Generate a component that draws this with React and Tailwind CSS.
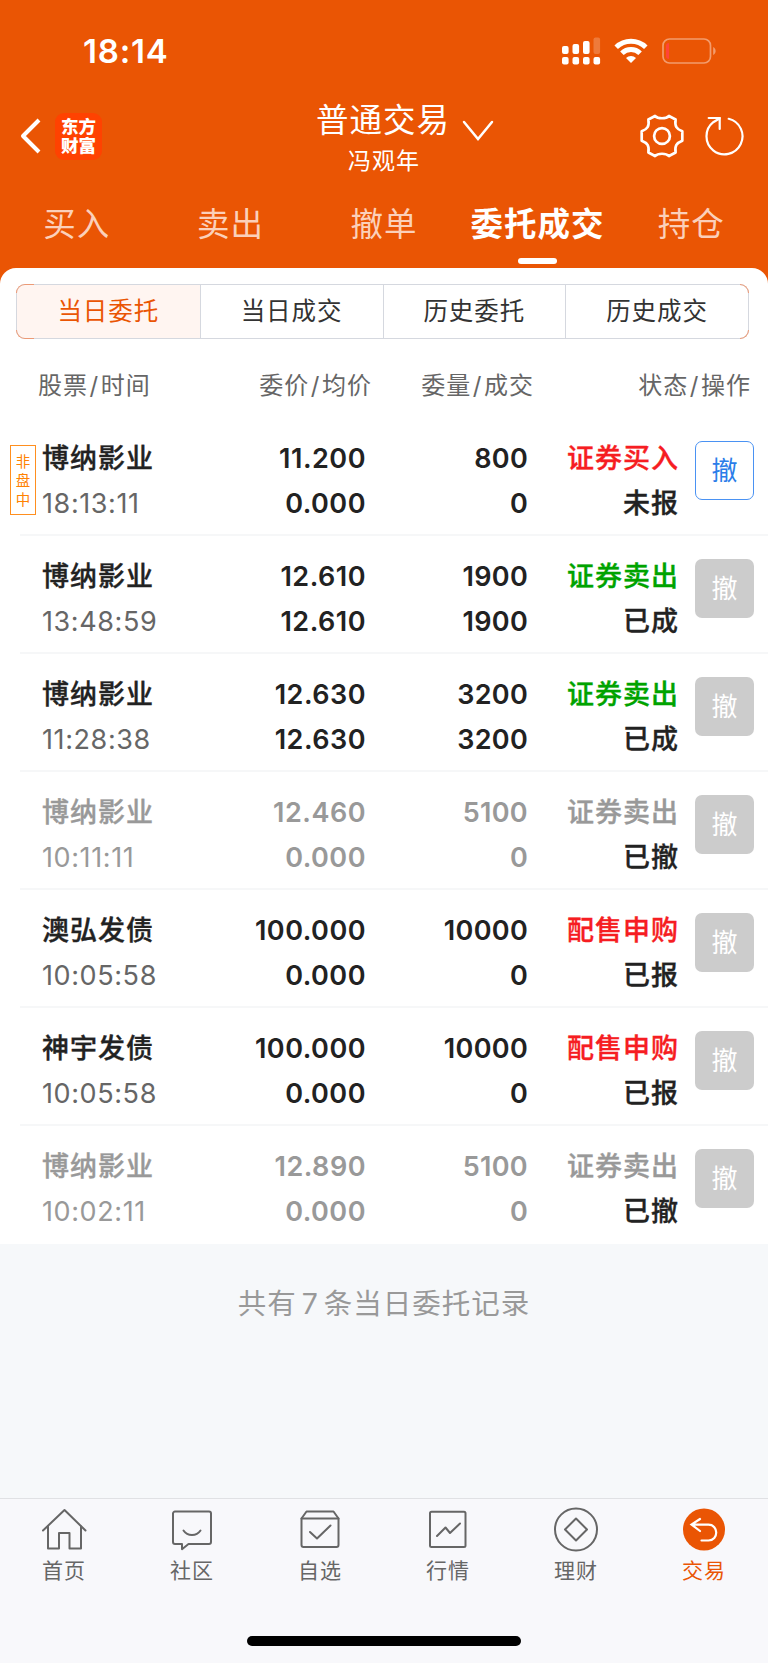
const tabs = ['买入', '卖出', '撤单', '委托成交', '持仓']
const segments = ['当日委托', '当日成交', '历史委托', '历史成交']

const orders = [
  { name: '博纳影业', time: '18:13:11', price: '11.200', avg: '0.000', qty: '800', done: '0', side: '证券买入', kind: 'buy', status: '未报', tag: '非盘中', canCancel: true },
  { name: '博纳影业', time: '13:48:59', price: '12.610', avg: '12.610', qty: '1900', done: '1900', side: '证券卖出', kind: 'sell', status: '已成' },
  { name: '博纳影业', time: '11:28:38', price: '12.630', avg: '12.630', qty: '3200', done: '3200', side: '证券卖出', kind: 'sell', status: '已成' },
  { name: '博纳影业', time: '10:11:11', price: '12.460', avg: '0.000', qty: '5100', done: '0', side: '证券卖出', kind: 'off', status: '已撤' },
  { name: '澳弘发债', time: '10:05:58', price: '100.000', avg: '0.000', qty: '10000', done: '0', side: '配售申购', kind: 'buy', status: '已报' },
  { name: '神宇发债', time: '10:05:58', price: '100.000', avg: '0.000', qty: '10000', done: '0', side: '配售申购', kind: 'buy', status: '已报' },
  { name: '博纳影业', time: '10:02:11', price: '12.890', avg: '0.000', qty: '5100', done: '0', side: '证券卖出', kind: 'off', status: '已撤' },
]

const sideColor = {
  buy: 'text-[#f61d22]',
  sell: 'text-[#00a300]',
  off: 'text-[#999]',
}

function StatusBar() {
  return (
    <div className="flex h-[102px] items-center justify-between pl-[83px] pr-[51px] text-white">
      <div className="text-[33px] font-semibold leading-none tracking-[0.8px]">18:14</div>
      <div className="flex items-center">
        <svg width="39" height="28" viewBox="0 0 39 28" fill="currentColor">
          <rect x="0" y="9" width="6.6" height="8" rx="2" />
          <rect x="10.5" y="7" width="6.6" height="10" rx="2" />
          <rect x="21" y="4" width="6.6" height="13" rx="2" />
          <rect x="31.5" y="0.5" width="6.6" height="16.5" rx="2" opacity="0.22" />
          <rect x="0" y="20" width="6.6" height="7.6" rx="2" />
          <rect x="10.5" y="20" width="6.6" height="7.6" rx="2" />
          <rect x="21" y="20" width="6.6" height="7.6" rx="2" />
          <rect x="31.5" y="20" width="6.6" height="7.6" rx="2" />
        </svg>
        <svg className="ml-[13px]" width="34" height="26" viewBox="0 0 34 26">
          <g fill="none" stroke="currentColor" strokeWidth="5">
            <path d="M2.2 9.2a21.3 21.3 0 0 1 29.6 0" />
            <path d="M7.9 15.2a13 13 0 0 1 18.2 0" />
          </g>
          <path d="M17 25l-5-5a7.2 7.2 0 0 1 10 0z" fill="currentColor" />
        </svg>
        <svg className="ml-[14px]" width="55" height="26" viewBox="0 0 55 26">
          <rect x="1" y="1" width="47.5" height="24" rx="6.5" fill="none" stroke="currentColor" strokeOpacity="0.42" strokeWidth="1.7" />
          <path d="M51.2 9c3.2 1.6 3.2 6.4 0 8z" fill="currentColor" opacity="0.42" />
          <path d="M7 5v16c-2 0-3-1-3-3V8c0-2 1-3 3-3z" fill="#ff4438" />
        </svg>
      </div>
    </div>
  )
}

function TitleBar() {
  return (
    <div className="grid h-[80px] grid-cols-[1fr_auto_1fr] text-white">
      <div className="flex items-center pb-[12px] pl-[20px]">
        <svg width="22" height="36" viewBox="0 0 22 36" fill="none" stroke="currentColor" strokeWidth="4" strokeLinejoin="round">
          <path d="M19 2L3 18l16 16" />
        </svg>
        <div className="ml-[13px] flex h-[47px] w-[47px] flex-col items-center justify-center rounded-[9px] bg-[#ff4201] text-[17.5px] font-black leading-[19px]">
          <span>东方</span>
          <span>财富</span>
        </div>
      </div>
      <div className="flex flex-col items-center">
        <div className="-mt-px flex h-[40px] items-center">
          <span className="pl-[42px] text-[32.5px] leading-[40px] tracking-[1px]">普通交易</span>
          <svg className="ml-[12px] mt-[20px]" width="32" height="22" viewBox="0 0 32 22" fill="none" stroke="currentColor" strokeWidth="2.5" strokeLinecap="round">
            <path d="M2 2l14 17L30 2" />
          </svg>
        </div>
        <div className="mt-px text-[23px] leading-[38px] tracking-[1px]">冯观年</div>
      </div>
      <div className="flex items-center justify-end pb-[12px] pr-[23px]">
        <svg width="46" height="44" viewBox="-23 -22 46 44" fill="none" stroke="currentColor" strokeWidth="2.7" strokeLinejoin="round">
          <path d="M-7-20C-4-17 4-17 7-20L13.600-16.500C12.600-9.500 14.500-7 20.300-4.700V4.700C14.500 7 12.600 9.500 13.600 16.500L7 20C4 17-4 17-7 20L-13.600 16.500C-12.600 9.500-14.500 7-20.300 4.700V-4.700C-14.500-7-12.600-9.500-13.600-16.500Z" />
          <circle r="7.900" />
        </svg>
        <svg className="ml-[18px]" width="42" height="42" viewBox="0 0 42 42" fill="none" stroke="currentColor" strokeWidth="2.2" strokeLinecap="round">
          <path d="M25.700 3.800A18 18 0 1 1 10.300 7.200L16.500 3.500" />
          <path d="M5.700 3h11v11" />
        </svg>
      </div>
    </div>
  )
}

function Tabs() {
  return (
    <div className="grid h-[86px] grid-cols-5 text-[32.5px] tracking-[1px]">
      {tabs.map((t) => {
        const active = t === '委托成交'
        return (
          <div key={t} className="flex flex-col items-center whitespace-nowrap pt-[21px]">
            <span className={active ? 'font-bold leading-[44px] text-white' : 'leading-[44px] text-[#fbd0ba]'}>{t}</span>
            {active && <span className="mt-[11px] h-[6px] w-[39px] rounded-full bg-white" />}
          </div>
        )
      })}
    </div>
  )
}

function Segments() {
  return (
    <div className="relative ml-4 mr-[19px]">
      <div className="grid h-[55px] grid-cols-4 overflow-hidden rounded-[9px] border border-[#d5d8df]">
        {segments.map((s, i) => (
          <div
            key={s}
            className={
              i === 0
                ? 'flex items-center justify-center bg-[#fff5f1] text-[24.5px] tracking-[1px] text-[#ea5504]'
                : 'flex items-center justify-center border-l border-[#d5d8df] text-[24.5px] tracking-[1px] text-[#333]'
            }
          >
            {s}
          </div>
        ))}
      </div>
      {/* accent on the four rounded corners */}
      <span className="absolute left-0 top-0 h-[9px] w-[18px] rounded-tl-[9px] border-l border-t border-[#ec9a76]" />
      <span className="absolute bottom-0 left-0 h-[9px] w-[18px] rounded-bl-[9px] border-b border-l border-[#ec9a76]" />
      <span className="absolute right-0 top-0 h-[9px] w-[9px] rounded-tr-[9px] border-r border-t border-[#ec9a76]" />
      <span className="absolute bottom-0 right-0 h-[9px] w-[9px] rounded-br-[9px] border-b border-r border-[#ec9a76]" />
    </div>
  )
}

function ColumnTitle({ a, b, className }) {
  return (
    <div className={className}>
      {a}
      <span className="mx-[1.5px]">/</span>
      {b}
    </div>
  )
}

function OrderRow({ o }) {
  const off = o.kind === 'off'
  const main = off ? 'text-[#999]' : 'text-[#222]'
  return (
    <div className="flex h-[118px] pl-[10px] pr-[14px]">
      <div className="w-[32px] pt-[27px]">
        {o.tag && (
          <div className="flex h-[70px] w-[26px] flex-col items-center justify-center border border-[#ff8f1f] text-[14.5px] leading-[19px] text-[#ff8200]">
            {[...o.tag].map((c) => (
              <span key={c}>{c}</span>
            ))}
          </div>
        )}
      </div>
      <div className="w-[130px] whitespace-nowrap pt-[18px] leading-[45px]">
        <div className={`text-[27px] font-medium tracking-[1px] [-webkit-text-stroke:0.35px] ${main}`}>{o.name}</div>
        <div className={off ? 'text-[27px] tracking-[0.6px] text-[#999]' : 'text-[27px] tracking-[0.6px] text-[#666]'}>{o.time}</div>
      </div>
      <div className={`w-[194px] pt-[18px] text-right text-[27px] font-semibold leading-[45px] tracking-[0.5px] ${main}`}>
        <div>{o.price}</div>
        <div>{o.avg}</div>
      </div>
      <div className={`w-[162px] pt-[18px] text-right text-[27px] font-semibold leading-[45px] tracking-[0.3px] ${main}`}>
        <div>{o.qty}</div>
        <div>{o.done}</div>
      </div>
      <div className="w-[151px] pt-[18px] text-right text-[27px] font-medium leading-[45px] tracking-[1px] [-webkit-text-stroke:0.35px]">
        <div className={sideColor[o.kind]}>{o.side}</div>
        <div className="text-[#222]">{o.status}</div>
      </div>
      <button
        className={
          o.canCancel
            ? 'ml-auto mt-[23px] h-[59px] w-[59px] rounded-[7px] border border-[#4a92f3] text-[26px] text-[#2b7de9]'
            : 'ml-auto mt-[23px] h-[59px] w-[59px] rounded-[7px] bg-[#ccc] text-[26px] text-white'
        }
      >
        撤
      </button>
    </div>
  )
}

const navIcons = {
  首页: (
    <>
      <path d="M2 22.500L23.500 2 44.500 22.500" />
      <path d="M7 18.500v22h11V25h10.500v15.500h11.500V18.500" />
    </>
  ),
  社区: (
    <>
      <path d="M6 3.500h34a2 2 0 0 1 2 2V34a2 2 0 0 1-2 2H19.500l-6.500 5.200V36H6a2 2 0 0 1-2-2V5.500a2 2 0 0 1 2-2z" />
      <path d="M14.500 22.500c4 6 13 6 17 0" />
    </>
  ),
  自选: (
    <>
      <path d="M4.500 10.500l5-7h27l5 7V37a2 2 0 0 1-2 2h-33a2 2 0 0 1-2-2z" />
      <path d="M4.500 10.500h37M13 24l7 6.500L33.500 17.500" />
    </>
  ),
  行情: (
    <>
      <rect x="5" y="3.700" width="35.500" height="35.300" rx="1.500" />
      <path d="M12 28l8.500-8.500 4.500 5.500L35 15.500" />
    </>
  ),
  理财: (
    <>
      <circle cx="23" cy="21.500" r="21" />
      <path d="M23 10.500l11 11-11 11-11-11z" />
    </>
  ),
}

function BottomNav() {
  return (
    <div className="flex h-[165px] flex-col border-t border-[#e0e1e4] bg-[#f8f8fb]">
      <div className="grid grid-cols-6 pt-[8px]">
        {Object.entries(navIcons).map(([label, icon]) => (
          <div key={label} className="flex flex-col items-center text-[#666]">
            <svg width="46" height="46" viewBox="0 -1 46 46" fill="none" stroke="currentColor" strokeWidth="2" strokeLinejoin="round" strokeLinecap="round">
              {icon}
            </svg>
            <span className="mt-[3px] text-[21px] leading-[30px] tracking-[1px]">{label}</span>
          </div>
        ))}
        <div className="flex flex-col items-center text-[#ea5504]">
          <svg width="46" height="46" viewBox="0 -1 46 46" fill="none" stroke="#fff" strokeWidth="2.200" strokeLinecap="round">
            <circle cx="23" cy="21.500" r="21" fill="#ea5504" stroke="none" />
            <path d="M19 11l-8.500 5.500L19 23M11 16.700h16.500c10.300 0 10.300 15.800 0 15.800H20.500" />
          </svg>
          <span className="mt-[3px] text-[21px] leading-[30px] tracking-[1px]">交易</span>
        </div>
      </div>
      <div className="mx-auto mt-auto mb-[17px] h-[10px] w-[274px] rounded-full bg-black" />
    </div>
  )
}

export default function App() {
  return (
    <div className="flex h-[1663px] w-[768px] flex-col overflow-hidden bg-[#f6f8fa] [font-family:Inter,'Noto_Sans_CJK_SC',sans-serif]">
      <div className="bg-[#ea5504]">
        <StatusBar />
        <TitleBar />
        <Tabs />
        <div className="h-[150px] rounded-t-[16px] bg-white pt-[16px]">
          <Segments />
          <div className="mt-[27px] flex pl-[38px] pr-[17px] text-[24px] leading-[40px] tracking-[1px] text-[#666]">
            <ColumnTitle a="股票" b="时间" className="w-[150px]" />
            <ColumnTitle a="委价" b="均价" className="w-[184px] text-right" />
            <ColumnTitle a="委量" b="成交" className="w-[162px] text-right" />
            <ColumnTitle a="状态" b="操作" className="flex-1 text-right" />
          </div>
        </div>
      </div>
      <div className="bg-white">
        {orders.map((o, i) => (
          <div key={i}>
            {i > 0 && <div className="ml-[20px] -mt-[2px] h-[2px] bg-[#f6f7f8]" />}
            <OrderRow o={o} />
          </div>
        ))}
      </div>
      <div className="mt-[38px] text-center text-[28.5px] leading-[44px] tracking-[1px] text-[#999]">
        共有<span className="mx-[5px]">7</span>条当日委托记录
      </div>
      <div className="mt-auto">
        <BottomNav />
      </div>
    </div>
  )
}
